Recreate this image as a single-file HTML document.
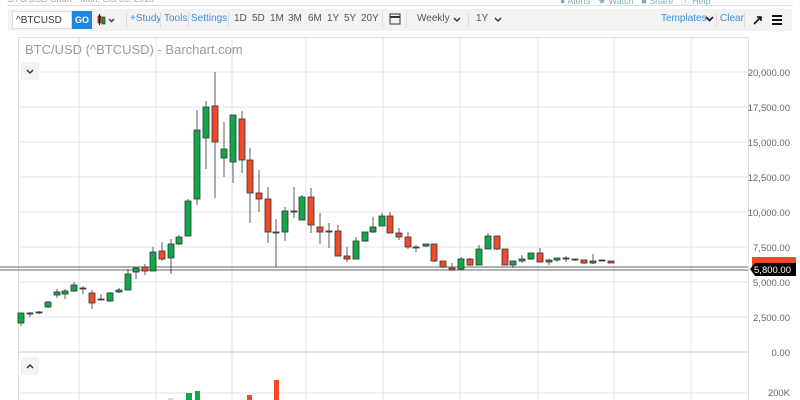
<!DOCTYPE html>
<html><head><meta charset="utf-8"><style>
body{margin:0;width:800px;height:400px;overflow:hidden;background:#fff;font-family:"Liberation Sans",sans-serif;position:relative}
.tb{position:absolute;left:8px;top:9px;width:784px;height:22px;background:#f3f3f3}
.t{position:absolute;top:13px;font-size:10px;color:#555;white-space:nowrap}
.b{color:#3d8fdc}
.sep{position:absolute;top:12px;width:1px;height:16px;background:#ddd}
</style></head><body>
<div style="position:absolute;left:8px;top:-6px;font-size:9px;color:#aaa">BTC/USD Chart · Mon, Oct 08, 2018</div>
<div style="position:absolute;left:560px;top:-6px;font-size:9px;color:#8ab;">● Alerts &nbsp; ★ Watch &nbsp; ■ Share &nbsp; ⓘ Help</div>
<div style="position:absolute;left:7px;top:5px;width:786px;height:1px;background:#ddd"></div>
<div class="tb"></div>
<div style="position:absolute;left:12px;top:11px;width:60px;height:18px;background:#fff;border:1px solid #ddd;box-sizing:border-box;font-size:10px;color:#333;padding:3px 0 0 3px">^BTCUSD</div>
<div style="position:absolute;left:72px;top:11px;width:20px;height:18px;background:#1f86e0;color:#fff;font-size:9px;font-weight:bold;text-align:center;line-height:18px">GO</div>
<svg style="position:absolute;left:97px;top:13px" width="24" height="14"><rect x="1" y="3" width="3" height="7" fill="#d03020" stroke="#222" stroke-width=".6"/><line x1="2.5" y1="1" x2="2.5" y2="12" stroke="#222"/><rect x="5" y="4" width="3" height="7" fill="#10a040" stroke="#222" stroke-width=".6"/><path d="M12 6l2.5 2.5 2.5-2.5" stroke="#333" stroke-width="1.4" fill="none"/></svg>
<div class="sep" style="left:126px"></div>
<div class="t b" style="left:130px">+Study</div><div class="sep" style="left:160px"></div>
<div class="t b" style="left:164px">Tools</div><div class="sep" style="left:188px"></div>
<div class="t b" style="left:191px">Settings</div><div class="sep" style="left:228px"></div>
<div class="t" style="left:234px">1D</div><div class="t" style="left:252px">5D</div><div class="t" style="left:270px">1M</div><div class="t" style="left:288px">3M</div><div class="t" style="left:308px">6M</div><div class="t" style="left:327px">1Y</div><div class="t" style="left:344px">5Y</div><div class="t" style="left:361px">20Y</div>
<div class="sep" style="left:382px"></div>
<svg style="position:absolute;left:389px;top:12px" width="12" height="13"><rect x="1" y="2" width="10" height="10" fill="none" stroke="#333"/><line x1="1" y1="5" x2="11" y2="5" stroke="#333" stroke-width="2"/></svg>
<div class="sep" style="left:406px"></div>
<div class="t" style="left:417px">Weekly</div><svg style="position:absolute;left:453px;top:17px" width="8" height="6"><path d="M1 1l3 3 3-3" stroke="#333" stroke-width="1.4" fill="none"/></svg>
<div class="sep" style="left:468px"></div>
<div class="t" style="left:476px">1Y</div><svg style="position:absolute;left:494px;top:17px" width="8" height="6"><path d="M1 1l3 3 3-3" stroke="#333" stroke-width="1.4" fill="none"/></svg>
<div class="t b" style="left:661px">Templates</div><svg style="position:absolute;left:705px;top:16px" width="9" height="7"><path d="M1 1l3.5 3.5 3.5-3.5" stroke="#222" stroke-width="1.8" fill="none"/></svg>
<div class="sep" style="left:716px"></div><div class="t b" style="left:720px">Clear</div><div class="sep" style="left:744px"></div>
<svg style="position:absolute;left:752px;top:14px" width="12" height="12"><path d="M2 10L9 3M5 3h4v4" stroke="#111" stroke-width="1.6" fill="none"/></svg>
<svg style="position:absolute;left:771px;top:14px" width="12" height="12"><path d="M1 2h10M1 6h10M1 10h10" stroke="#111" stroke-width="2"/></svg>

<svg style="position:absolute;left:0;top:0" width="800" height="400">
<g stroke="#e3e3e3" stroke-width="1">
<line x1="79" y1="37" x2="79" y2="400"/><line x1="156" y1="37" x2="156" y2="400"/><line x1="232" y1="37" x2="232" y2="400"/><line x1="306" y1="37" x2="306" y2="400"/><line x1="383" y1="37" x2="383" y2="400"/><line x1="460" y1="37" x2="460" y2="400"/><line x1="538" y1="37" x2="538" y2="400"/><line x1="614" y1="37" x2="614" y2="400"/><line x1="691" y1="37" x2="691" y2="400"/>
<line x1="18" y1="72" x2="748" y2="72"/><line x1="18" y1="107" x2="748" y2="107"/><line x1="18" y1="142" x2="748" y2="142"/><line x1="18" y1="177" x2="748" y2="177"/><line x1="18" y1="212" x2="748" y2="212"/><line x1="18" y1="247" x2="748" y2="247"/><line x1="18" y1="282" x2="748" y2="282"/><line x1="18" y1="317" x2="748" y2="317"/><line x1="18" y1="393" x2="748" y2="393"/>
</g>
<rect x="18.5" y="37.5" width="730" height="370" fill="none" stroke="#ddd"/>
<line x1="18" y1="352" x2="748" y2="352" stroke="#ccc"/>
<line x1="0" y1="267" x2="748" y2="267" stroke="#666"/><line x1="0" y1="270" x2="748" y2="270" stroke="#666"/>
<g id="c" stroke="#333" stroke-width="0.8"></g>
<rect x="168" y="398" width="5" height="3" fill="#bfe8cc"/><rect x="186" y="393" width="6" height="8" fill="#10a848"/><rect x="195" y="391" width="5" height="10" fill="#10a848"/><rect x="247" y="395" width="5" height="6" fill="#f04a28"/><rect x="274" y="380" width="5" height="21" fill="#f04a28"/>
<g font-size="9.5" fill="#666" text-anchor="end" font-family="Liberation Sans,sans-serif">
<text x="790" y="76">20,000.00</text><text x="790" y="111">17,500.00</text><text x="790" y="146">15,000.00</text><text x="790" y="181">12,500.00</text><text x="790" y="216">10,000.00</text><text x="790" y="251">7,500.00</text><text x="790" y="286">5,000.00</text><text x="790" y="321">2,500.00</text><text x="790" y="356">0.00</text><text x="790" y="396">200K</text></g>
<rect x="752" y="257" width="44" height="10" fill="#f04a28"/>
<path d="M750 269l5-6h41v13h-41z" fill="#000"/>
<text x="791" y="273" font-size="9.5" fill="#fff" text-anchor="end" font-family="Liberation Sans,sans-serif">5,800.00</text>
</svg>
<div style="position:absolute;left:25px;top:42px;font-size:13px;color:#999">BTC/USD (^BTCUSD) - Barchart.com</div>
<div style="position:absolute;left:21px;top:62px;width:18px;height:18px;background:#f3f3f3;border-radius:2px"><svg width="18" height="18"><path d="M6 8l3 3 3-3" stroke="#333" stroke-width="1.4" fill="none"/></svg></div>
<div style="position:absolute;left:21px;top:357px;width:18px;height:18px;background:#f3f3f3;border-radius:2px"><svg width="18" height="18"><path d="M6 11l3-3 3 3" stroke="#333" stroke-width="1.4" fill="none"/></svg></div>
<script>
var d=[[21,313,323,313,326,'g'],[30,313,314,312,317,'g'],[39,312,313,311,314,'g'],[48,302,307,301,308,'g'],[57,292,295,289,298,'g'],[65,291,294,289,299,'g'],[74,285,291,282,292,'g'],[83,288,289,286,294,'r'],[92,293,303,290,309,'r'],[101,299,300,294,300,'r'],[110,293,301,292,302,'g'],[119,290,292,288,293,'g'],[128,274,290,269,290,'g'],[136,268,272,267,279,'g'],[145,267,271,264,275,'r'],[153,252,271,247,271,'g'],[162,251,259,242,261,'r'],[171,244,258,239,274,'g'],[179,237,244,235,245,'g'],[188,201,236,199,236,'g'],[197,130,199,110,205,'g'],[206,107,138,101,169,'g'],[215,106,142,72,198,'r'],[224,149,158,122,177,'g'],[233,115,162,115,183,'g'],[242,119,160,111,173,'r'],[250,160,193,148,223,'r'],[259,193,199,170,212,'r'],[268,199,232,187,243,'r'],[276,232,232,219,267,'g'],[285,211,232,207,241,'g'],[294,211,212,187,218,'g'],[302,197,220,195,220,'g'],[311,197,225,188,233,'r'],[320,227,232,213,244,'r'],[329,231,232,223,248,'g'],[338,231,256,225,256,'r'],[347,256,259,247,262,'r'],[356,241,259,237,259,'g'],[365,232,241,232,242,'g'],[373,227,232,217,233,'g'],[382,216,226,213,226,'g'],[390,216,233,212,233,'r'],[399,233,237,228,240,'r'],[408,237,247,232,249,'r'],[416,247,248,245,252,'g'],[426,244,246,244,247,'g'],[434,244,261,244,262,'r'],[443,261,267,261,268,'r'],[452,268,270,263,270,'r'],[461,259,269,257,270,'g'],[470,259,265,258,266,'r'],[479,249,265,245,265,'g'],[488,236,249,233,249,'g'],[497,236,249,236,250,'r'],[505,249,265,249,265,'r'],[513,261,265,261,268,'g'],[522,259,261,255,263,'g'],[531,253,259,253,260,'g'],[540,253,262,248,262,'r'],[549,260,262,259,265,'g'],[557,258,260,258,262,'g'],[566,258,259,256,262,'g'],[575,259,260,259,261,'r'],[584,260,263,260,264,'r'],[593,261,263,254,264,'g'],[602,260,261,260,261,'g'],[611,261,263,261,263,'r']];
var s='';d.forEach(function(c){var f=c[5]=='g'?'#10a848':'#f04a28';s+='<line x1="'+c[0]+'" y1="'+c[3]+'" x2="'+c[0]+'" y2="'+c[4]+'"/><rect x="'+(c[0]-3)+'" y="'+c[1]+'" width="6" height="'+Math.max(1,c[2]-c[1])+'" fill="'+f+'"/>';});
document.getElementById('c').innerHTML=s;
</script>
</body></html>
